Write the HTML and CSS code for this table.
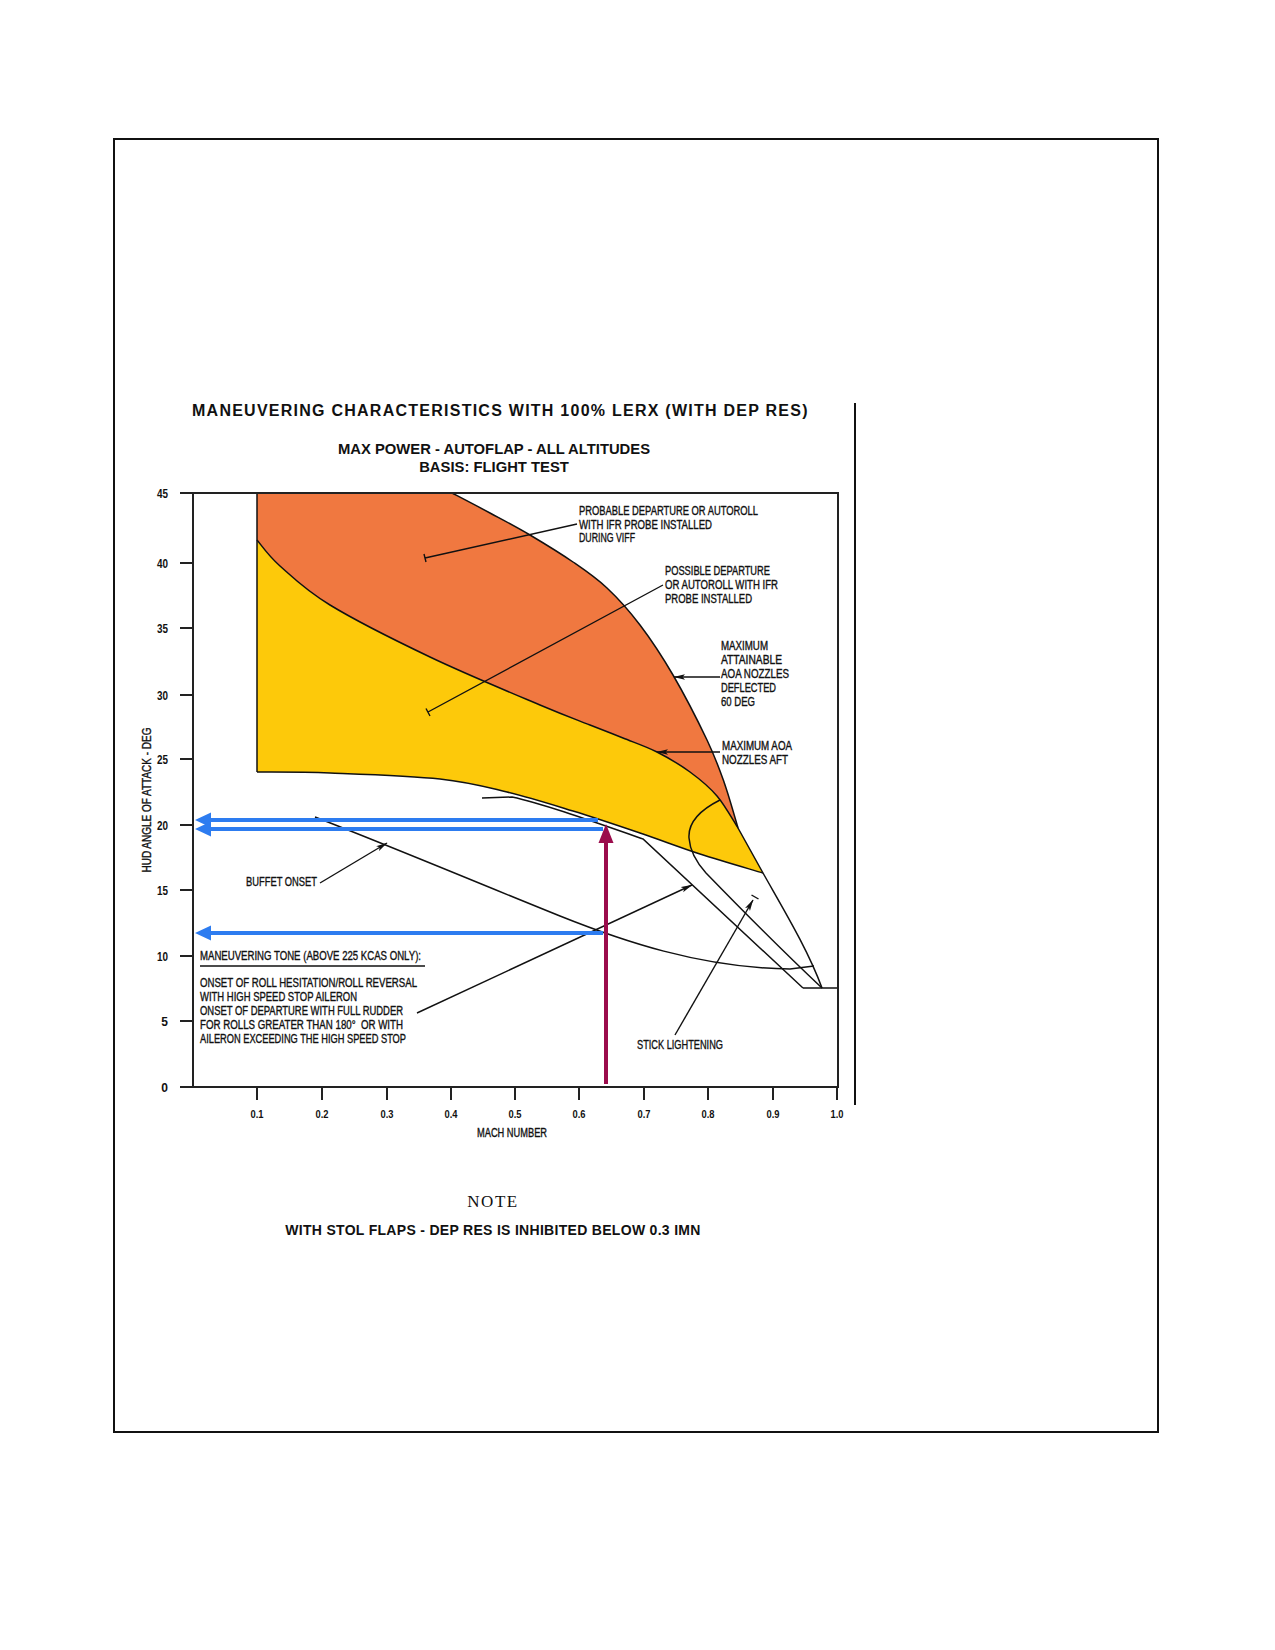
FILE: index.html
```html
<!DOCTYPE html>
<html lang="en">
<head>
<meta charset="utf-8">
<title>Maneuvering Characteristics</title>
<link rel="stylesheet" href="styles.css">
</head>
<body>
<div class="sheet">
  <div class="figure">
    <h1 class="fig-title">MANEUVERING CHARACTERISTICS WITH 100% LERX (WITH DEP RES)</h1>
    <div class="fig-sub">
      <p>MAX POWER - AUTOFLAP - ALL ALTITUDES</p>
      <p>BASIS: FLIGHT TEST</p>
    </div>
    <svg class="chart" viewBox="130 480 724 670" width="724" height="670" xmlns="http://www.w3.org/2000/svg">
      <defs>
        <marker id="ah" markerWidth="12" markerHeight="8" refX="11" refY="4" orient="auto" markerUnits="userSpaceOnUse">
          <path d="M0,1.2 L11.5,4 L0,6.8 L2.5,4 Z" class="mk"/>
        </marker>
      </defs>

      <!-- filled regions -->
      <path class="fill-orange" d="M257,493 L452,493 C458.3,496.3 477,506 490,513 C503,520 516.2,526.8 530,535 C543.8,543.2 560.2,553.2 573,562 C585.8,570.8 595.8,577.5 607,588 C618.2,598.5 629,610.5 640,625 C651,639.5 661.8,655.8 673,675 C684.2,694.2 698.5,722.2 707,740 C715.5,757.8 718.8,767.3 724,782 C729.2,796.7 735.7,820.3 738,828 C734.5,822.7 725,805.3 717,796 C709,786.7 700,779.3 690,772 C680,764.7 668.2,757.7 657,752 C645.8,746.3 634.2,742.5 623,738 C611.8,733.5 603.8,730.5 590,725 C576.2,719.5 566.7,716.3 540,705 C513.3,693.7 465,673.7 430,657 C395,640.3 355,620.2 330,605 C305,589.8 292.2,576.8 280,566 C267.8,555.2 260.8,544.3 257,540 Z"/>
      <path class="fill-yellow" d="M257,540 C260.8,544.3 267.8,555.2 280,566 C292.2,576.8 305,589.8 330,605 C355,620.2 395,640.3 430,657 C465,673.7 513.3,693.7 540,705 C566.7,716.3 576.2,719.5 590,725 C603.8,730.5 611.8,733.5 623,738 C634.2,742.5 645.8,746.3 657,752 C668.2,757.7 680,764.7 690,772 C700,779.3 709,786.7 717,796 C725,805.3 734.5,822.7 738,828 L763,873 C752.5,869.8 720.5,860.7 700,854 C679.5,847.3 661.2,840.2 640,833 C618.8,825.8 595.2,817.8 573,811 C550.8,804.2 529.2,797.3 507,792 C484.8,786.7 469.5,782.2 440,779 C410.5,775.8 360.5,774.2 330,773 C299.5,771.8 269.2,772.2 257,772 Z"/>

      <!-- curves -->
      <path class="curve" d="M257,493 L257,772"/>
      <path class="curve" d="M452,493 C458.3,496.3 477,506 490,513 C503,520 516.2,526.8 530,535 C543.8,543.2 560.2,553.2 573,562 C585.8,570.8 595.8,577.5 607,588 C618.2,598.5 629,610.5 640,625 C651,639.5 661.8,655.8 673,675 C684.2,694.2 698.5,722.2 707,740 C715.5,757.8 718.8,767.3 724,782 C729.2,796.7 735.7,820.3 738,828"/>
      <path class="curve" d="M257,540 C260.8,544.3 267.8,555.2 280,566 C292.2,576.8 305,589.8 330,605 C355,620.2 395,640.3 430,657 C465,673.7 513.3,693.7 540,705 C566.7,716.3 576.2,719.5 590,725 C603.8,730.5 611.8,733.5 623,738 C634.2,742.5 645.8,746.3 657,752 C668.2,757.7 680,764.7 690,772 C700,779.3 709,786.7 717,796 C725,805.3 734.5,822.7 738,828"/>
      <path class="curve" d="M257,772 C269.2,772.2 299.5,771.8 330,773 C360.5,774.2 410.5,775.8 440,779 C469.5,782.2 484.8,786.7 507,792 C529.2,797.3 550.8,804.2 573,811 C595.2,817.8 618.8,825.8 640,833 C661.2,840.2 679.5,847.3 700,854 C720.5,860.7 752.5,869.8 763,873"/>
      <path class="curve" d="M738,828 L763,873 C785,912 808,950 822,988"/>
      <path class="curve" d="M720,800 C700,810 688,823 689,838 C690,852 697,863 706,873 C740,908 790,958 822,988"/>
      <path class="curve" d="M482,798 L512,797 C540,803 580,817 643,839 L803,988"/>
      <path class="curve" d="M315,817 C400,850 500,892 560,916 C620,940 700,968 790,969 L814,966"/>
      <path class="curve" d="M803,988 L838,988"/>

      <!-- axes -->
      <path class="axis" d="M180,493 H838 V1087 H180 M193,493 V1087"/>
      <path class="axis" d="M180,563 H193 M180,628 H193 M180,695 H193 M180,759 H193 M180,825 H193 M180,890 H193 M180,956 H193 M180,1021 H193"/>
      <path class="axis" d="M257,1087 V1100 M322,1087 V1100 M387,1087 V1100 M451,1087 V1100 M515,1087 V1100 M579,1087 V1100 M644,1087 V1100 M708,1087 V1100 M773,1087 V1100 M837,1087 V1100"/>

      <!-- leaders and arrows -->
      <path class="leader" d="M577,524 L425,558 M426,562 L424,554"/>
      <path class="leader" d="M663,585 L428,712 M430,716 L426,708.5"/>
      <path class="leader" marker-end="url(#ah)" d="M720,677 L674,677"/>
      <path class="leader" marker-end="url(#ah)" d="M720,752 L657,752"/>
      <path class="leader" marker-end="url(#ah)" d="M320,883 L387,843"/>
      <path class="leader" marker-end="url(#ah)" d="M417,1013 L692,885"/>
      <path class="leader" marker-end="url(#ah)" d="M675,1035 L753,900"/>
      <path class="leader" d="M751.5,895 L758.5,899"/>
      <path class="leader" d="M200,966 L425,966"/>

      <!-- highlight arrows -->
      <path class="blue" d="M207,820 H598 M207,829 H603 M207,933 H603"/>
      <path class="blue-head" d="M195,820 L211,812.5 L211,827.5 Z M195,829 L211,821.5 L211,836.5 Z M195,933 L211,925.5 L211,940.5 Z"/>
      <path class="crimson" d="M606,1084 V838"/>
      <path class="crimson-head" d="M606,824 L613.5,843 L598.5,843 Z"/>

      <!-- tick labels -->
      <g class="tick-lbl ylbl">
        <text x="168" y="497.5" textLength="11" lengthAdjust="spacingAndGlyphs">45</text>
        <text x="168" y="567.5" textLength="11" lengthAdjust="spacingAndGlyphs">40</text>
        <text x="168" y="632.5" textLength="11" lengthAdjust="spacingAndGlyphs">35</text>
        <text x="168" y="699.5" textLength="11" lengthAdjust="spacingAndGlyphs">30</text>
        <text x="168" y="763.5" textLength="11" lengthAdjust="spacingAndGlyphs">25</text>
        <text x="168" y="829.5" textLength="11" lengthAdjust="spacingAndGlyphs">20</text>
        <text x="168" y="894.5" textLength="11" lengthAdjust="spacingAndGlyphs">15</text>
        <text x="168" y="960.5" textLength="11" lengthAdjust="spacingAndGlyphs">10</text>
        <text x="168" y="1025.5">5</text>
        <text x="168" y="1091.5">0</text>
      </g>
      <g class="tick-lbl xlbl">
        <text x="257" y="1117.5" textLength="13" lengthAdjust="spacingAndGlyphs">0.1</text>
        <text x="322" y="1117.5" textLength="13" lengthAdjust="spacingAndGlyphs">0.2</text>
        <text x="387" y="1117.5" textLength="13" lengthAdjust="spacingAndGlyphs">0.3</text>
        <text x="451" y="1117.5" textLength="13" lengthAdjust="spacingAndGlyphs">0.4</text>
        <text x="515" y="1117.5" textLength="13" lengthAdjust="spacingAndGlyphs">0.5</text>
        <text x="579" y="1117.5" textLength="13" lengthAdjust="spacingAndGlyphs">0.6</text>
        <text x="644" y="1117.5" textLength="13" lengthAdjust="spacingAndGlyphs">0.7</text>
        <text x="708" y="1117.5" textLength="13" lengthAdjust="spacingAndGlyphs">0.8</text>
        <text x="773" y="1117.5" textLength="13" lengthAdjust="spacingAndGlyphs">0.9</text>
        <text x="837" y="1117.5" textLength="13" lengthAdjust="spacingAndGlyphs">1.0</text>
      </g>
      <text class="lbl mid" x="512" y="1137.3" textLength="70" lengthAdjust="spacingAndGlyphs">MACH NUMBER</text>
      <text class="lbl mid" x="147" y="804.3" transform="rotate(-90 147 800)" textLength="145" lengthAdjust="spacingAndGlyphs">HUD ANGLE OF ATTACK - DEG</text>

      <!-- annotations -->
      <g class="lbl">
        <text x="579" y="515.3" textLength="179" lengthAdjust="spacingAndGlyphs">PROBABLE DEPARTURE OR AUTOROLL</text>
        <text x="579" y="528.8" textLength="133" lengthAdjust="spacingAndGlyphs">WITH IFR PROBE INSTALLED</text>
        <text x="579" y="542.3" textLength="56" lengthAdjust="spacingAndGlyphs">DURING VIFF</text>

        <text x="665" y="575.3" textLength="105" lengthAdjust="spacingAndGlyphs">POSSIBLE DEPARTURE</text>
        <text x="665" y="589.3" textLength="113" lengthAdjust="spacingAndGlyphs">OR AUTOROLL WITH IFR</text>
        <text x="665" y="603.3" textLength="87" lengthAdjust="spacingAndGlyphs">PROBE INSTALLED</text>

        <text x="721" y="650.3" textLength="47" lengthAdjust="spacingAndGlyphs">MAXIMUM</text>
        <text x="721" y="664.3" textLength="61" lengthAdjust="spacingAndGlyphs">ATTAINABLE</text>
        <text x="721" y="678.3" textLength="68" lengthAdjust="spacingAndGlyphs">AOA NOZZLES</text>
        <text x="721" y="692.3" textLength="55" lengthAdjust="spacingAndGlyphs">DEFLECTED</text>
        <text x="721" y="706.3" textLength="34" lengthAdjust="spacingAndGlyphs">60 DEG</text>

        <text x="722" y="750.3" textLength="70" lengthAdjust="spacingAndGlyphs">MAXIMUM AOA</text>
        <text x="722" y="764.3" textLength="66" lengthAdjust="spacingAndGlyphs">NOZZLES AFT</text>

        <text x="246" y="886.3" textLength="71" lengthAdjust="spacingAndGlyphs">BUFFET ONSET</text>

        <text x="200" y="960.3" textLength="221" lengthAdjust="spacingAndGlyphs">MANEUVERING TONE (ABOVE 225 KCAS ONLY):</text>
        <text x="200" y="987.3" textLength="217" lengthAdjust="spacingAndGlyphs">ONSET OF ROLL HESITATION/ROLL REVERSAL</text>
        <text x="200" y="1001.3" textLength="157" lengthAdjust="spacingAndGlyphs">WITH HIGH SPEED STOP AILERON</text>
        <text x="200" y="1015.3" textLength="203" lengthAdjust="spacingAndGlyphs">ONSET OF DEPARTURE WITH FULL RUDDER</text>
        <text x="200" y="1029.3" textLength="203" lengthAdjust="spacingAndGlyphs">FOR ROLLS GREATER THAN 180°&#160; OR WITH</text>
        <text x="200" y="1043.3" textLength="206" lengthAdjust="spacingAndGlyphs">AILERON EXCEEDING THE HIGH SPEED STOP</text>

        <text x="637" y="1049.3" textLength="86" lengthAdjust="spacingAndGlyphs">STICK LIGHTENING</text>
      </g>
    </svg>
  </div>
  <div class="note">
    <p class="note-head">NOTE</p>
    <p class="note-text">WITH STOL FLAPS - DEP RES IS INHIBITED BELOW 0.3 IMN</p>
  </div>
</div>
</body>
</html>
```
FILE: styles.css
```css
html, body {
  margin: 0;
  padding: 0;
  background: #ffffff;
}

body {
  font-family: "Liberation Sans", Arial, sans-serif;
  color: #111111;
}

.sheet {
  margin: 138px 0 0 113px;
  width: 1042px;
  height: 1291px;
  border: 2px solid #111111;
}

.figure {
  margin: 263px 0 0 15px;
  width: 724px;
  height: 702px;
  border-right: 2px solid #111111;
}

.fig-title {
  margin: 0;
  padding-left: 62px;
  font-family: "Liberation Sans", Arial, sans-serif;
  font-weight: bold;
  font-size: 16px;
  line-height: 16px;
  letter-spacing: 1.25px;
  white-space: nowrap;
  color: #111111;
}

.fig-sub {
  margin-top: 21px;
  padding-left: 4px;
  text-align: center;
}

.fig-sub p {
  margin: 0;
  font-weight: bold;
  font-size: 14.8px;
  line-height: 18px;
  white-space: nowrap;
}

.chart {
  display: block;
  margin-top: 4px;
  overflow: visible;
}

.fill-orange {
  fill: #f07840;
}

.fill-yellow {
  fill: #fdc90a;
}

.curve {
  fill: none;
  stroke: #111111;
  stroke-width: 1.5;
}

.axis {
  fill: none;
  stroke: #222222;
  stroke-width: 2;
}

.leader {
  fill: none;
  stroke: #111111;
  stroke-width: 1.4;
}

.mk {
  fill: #111111;
}

.blue {
  fill: none;
  stroke: #2d7cf0;
  stroke-width: 4;
}

.blue-head {
  fill: #2d7cf0;
}

.crimson {
  fill: none;
  stroke: #9b0c4c;
  stroke-width: 4;
}

.crimson-head {
  fill: #9b0c4c;
}

.tick-lbl {
  font-family: "Liberation Sans", Arial, sans-serif;
  font-weight: bold;
  font-size: 12px;
  fill: #111111;
}

.ylbl {
  text-anchor: end;
}

.xlbl {
  text-anchor: middle;
  font-size: 11.5px;
}

.lbl {
  font-family: "Liberation Sans", Arial, sans-serif;
  font-size: 12px;
  fill: #111111;
  stroke: #111111;
  stroke-width: 0.35;
}

.mid {
  text-anchor: middle;
}

.note {
  margin: 87px 0 0 15px;
  width: 726px;
  text-align: center;
}

.note p {
  margin: 0;
  white-space: nowrap;
}

.note-head {
  font-family: "Liberation Serif", "Times New Roman", serif;
  font-size: 17px;
  line-height: 20px;
  letter-spacing: 1.5px;
}

.note-text {
  margin-top: 9px !important;
  font-family: "Liberation Sans", Arial, sans-serif;
  font-weight: bold;
  font-size: 14px;
  line-height: 18px;
  letter-spacing: 0.3px;
}
```
